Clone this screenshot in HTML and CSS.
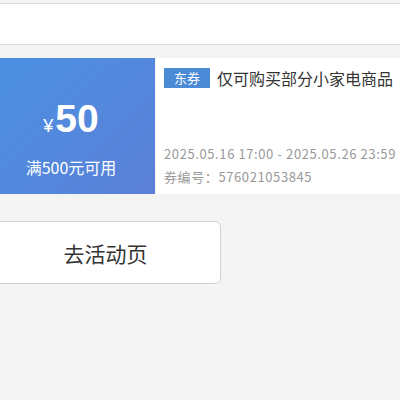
FILE: index.html
```html
<!DOCTYPE html>
<html lang="zh-CN">
<head>
    <meta charset="UTF-8">
    <meta name="viewport" content="width=device-width, initial-scale=1.0">
    <title>优惠券</title>
    <link rel="stylesheet" href="styles.css">
</head>
<body>
    <header class="topbar"></header>
    <main>
        <div class="coupon">
            <div class="coupon-left">
                <div class="amount"><span class="yen">¥</span>50</div>
                <div class="limit">满500元可用</div>
            </div>
            <div class="coupon-right">
                <div class="title-row">
                    <span class="tag">东券</span>
                    <span class="title">仅可购买部分小家电商品</span>
                </div>
                <div class="meta">
                    <div class="date">2025.05.16 17:00 - 2025.05.26 23:59</div>
                    <div class="code">券编号：576021053845</div>
                </div>
            </div>
        </div>
        <div class="actions">
            <button type="button" class="go-btn">去活动页</button>
        </div>
    </main>
</body>
</html>
```

FILE: styles.css
```css
body {
    margin: 0;
    padding-top: 3px;
    background: #f4f4f4;
    font-family: "Noto Sans CJK SC", "Noto Sans", sans-serif;
    color: #333;
    overflow: hidden;
}
.topbar {
    height: 40px;
    background: #fff;
    border-top: 1px solid #dcdcdc;
    border-bottom: 1px solid #dcdcdc;
}
.coupon {
    display: flex;
    gap: 1px;
    height: 136px;
    margin-top: 13px;
    margin-left: -13px;
}
.coupon-left {
    width: 168px;
    flex-shrink: 0;
    display: flex;
    flex-direction: column;
    align-items: center;
    justify-content: center;
    background: linear-gradient(135deg, #4a91e2 0%, #5b80d8 100%);
    color: #fff;
}
.amount {
    font-family: "Liberation Sans", Arial, sans-serif;
    font-weight: bold;
    font-size: 39px;
    line-height: 44px;
    margin-top: 24px;
}
.yen {
    font-size: 18px;
    font-weight: normal;
    margin-right: 2px;
}
.limit {
    font-size: 16px;
    margin-top: 7px;
}
.coupon-right {
    flex: 1;
    background: #fff;
    padding: 8px 0 6px 8px;
    display: flex;
    flex-direction: column;
    justify-content: space-between;
    white-space: nowrap;
}
.title-row {
    display: flex;
    align-items: center;
    gap: 7px;
}
.tag {
    background: #4a8ad6;
    color: #fff;
    font-size: 13px;
    line-height: 20px;
    padding: 0 10px;
}
.title {
    font-size: 16px;
    color: #333;
}
.meta {
    font-size: 13px;
    color: #999;
    line-height: 23px;
    letter-spacing: 0.6px;
}
.actions {
    margin-top: 27px;
}
.go-btn {
    margin-left: -10px;
    width: 231px;
    height: 63px;
    background: #fff;
    border: 1px solid #d2d2d2;
    border-radius: 6px;
    font-family: "Noto Sans CJK SC", sans-serif;
    font-size: 21px;
    color: #333;
}
```
